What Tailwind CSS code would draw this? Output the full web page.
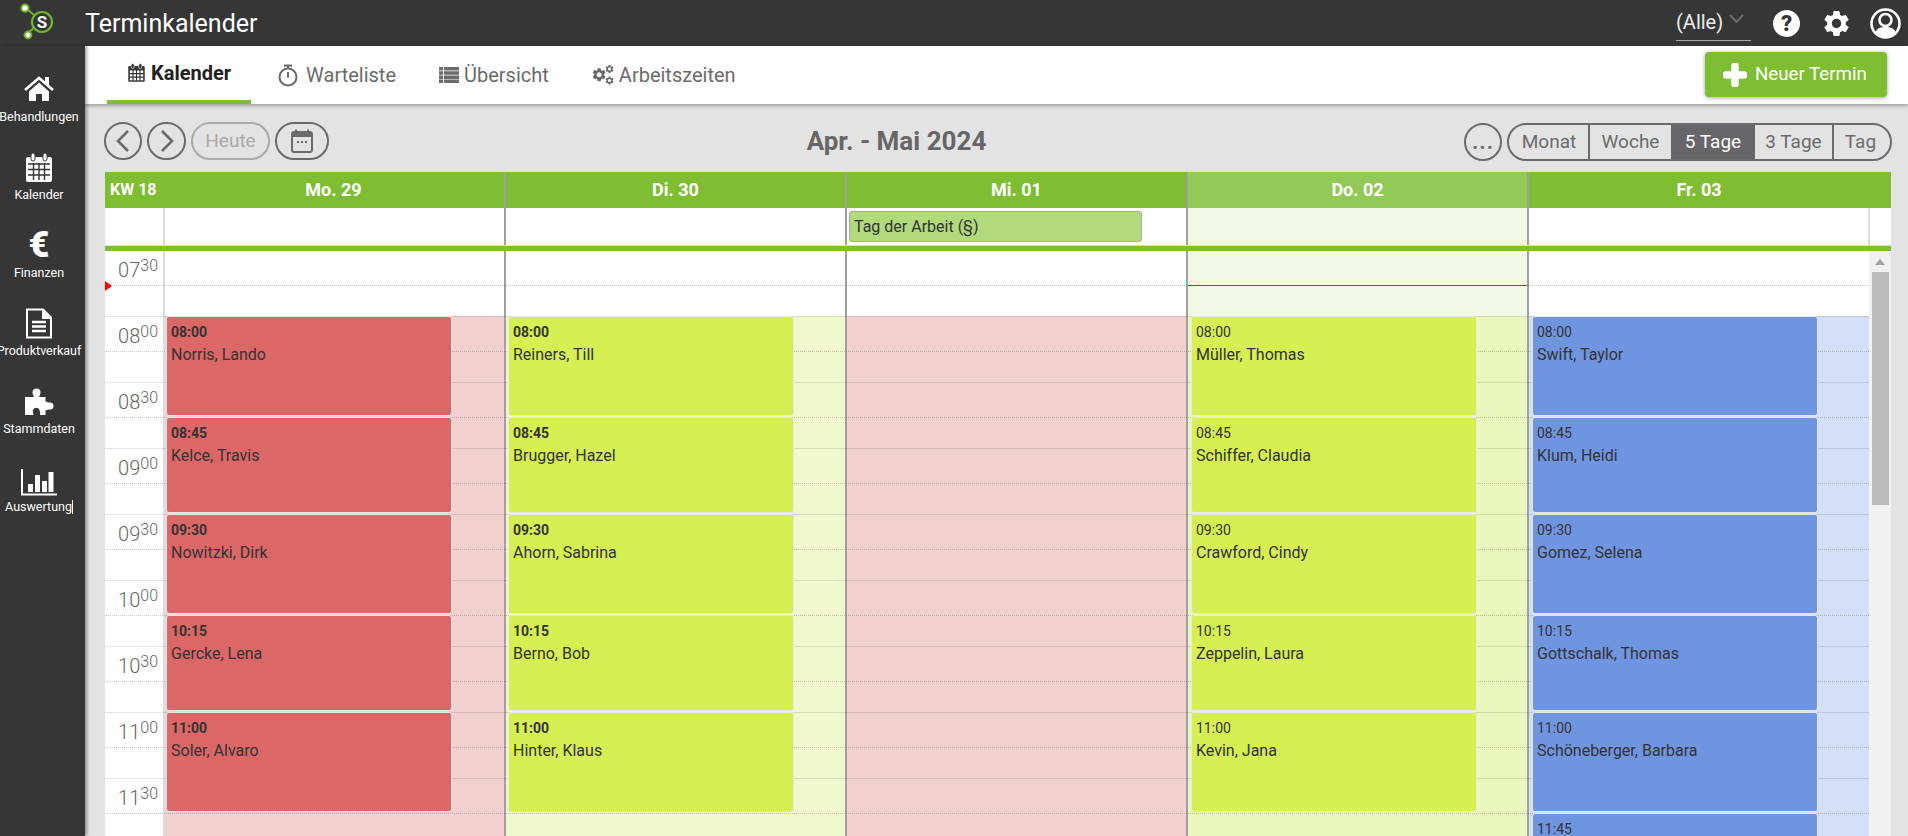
<!DOCTYPE html>
<html lang="de">

<head>
    <meta charset="UTF-8">
    <title>Terminkalender</title>
    <script src="https://cdn.jsdelivr.net/npm/@tailwindcss/browser@4"></script>
</head>

<body class="h-[836px] w-[1908px] overflow-hidden flex flex-col bg-[#e3e3e3] font-['Roboto',sans-serif]">

    <!-- top bar -->
    <header class="h-[46px] shrink-0 bg-[#363636] flex items-center text-white">
        <div class="w-[85px] h-full shrink-0">
            <svg width="85" height="46" viewBox="0 0 85 46">
                <path d="M28 10 L34 15 M29 32 L34 28" stroke="#6fb52f" stroke-width="2" />
                <circle cx="42" cy="22" r="10" fill="none" stroke="#6fb52f" stroke-width="2.2" />
                <circle cx="25" cy="8" r="3.6" fill="#fff" stroke="#6fb52f" stroke-width="2" />
                <circle cx="28" cy="35" r="3.4" fill="#fff" stroke="#6fb52f" stroke-width="2" />
                <text x="42" y="28" text-anchor="middle" fill="#fff" font-family="Roboto" font-weight="700" font-size="17">S</text>
            </svg>
        </div>
        <h1 class="text-[25px] leading-none">Terminkalender</h1>
        <div class="ml-auto flex items-center">
            <div class="w-[75px] h-[36px] mt-[-1px] border-b border-[#aaa] flex items-center">
                <span class="text-[20px] leading-none text-[#eee]">(Alle)</span>
                <svg class="ml-[6px] mt-[-6px]" width="15" height="10" viewBox="0 0 15 10"><path d="M1 1 L7.500 8 L14 1" fill="none" stroke="#6a6a6a" stroke-width="2" /></svg>
            </div>
            <div class="ml-[22px] w-[27px] h-[27px] rounded-full bg-white text-[#363636] text-[22px] font-black leading-[27px] text-center">?</div>
            <svg class="ml-[21px]" width="31" height="31" viewBox="0 0 24 24"><path fill="#fff" d="M19.14 12.94c.04-.3.06-.61.06-.94 0-.32-.02-.64-.07-.94l2.03-1.58c.18-.14.23-.41.12-.61l-1.92-3.32c-.12-.22-.37-.29-.59-.22l-2.39.96c-.5-.38-1.03-.7-1.62-.94l-.36-2.54c-.04-.24-.24-.41-.48-.41h-3.84c-.24 0-.43.17-.47.41l-.36 2.54c-.59.24-1.13.57-1.62.94l-2.39-.96c-.22-.08-.47 0-.59.22L2.74 8.87c-.12.21-.08.47.12.61l2.03 1.58c-.05.3-.09.63-.09.94s.02.64.07.94l-2.03 1.58c-.18.14-.23.41-.12.61l1.92 3.32c.12.22.37.29.59.22l2.39-.96c.5.38 1.03.7 1.62.94l.36 2.54c.05.24.24.41.48.41h3.84c.24 0 .44-.17.47-.41l.36-2.54c.59-.24 1.13-.56 1.62-.94l2.39.96c.22.08.47 0 .59-.22l1.92-3.32c.12-.22.07-.47-.12-.61l-2.01-1.58zM12 15.6c-1.98 0-3.6-1.62-3.6-3.6s1.62-3.6 3.6-3.6 3.6 1.62 3.6 3.6-1.62 3.6-3.6 3.6z" /></svg>
            <svg class="ml-[18px] mr-[7px]" width="31" height="31" viewBox="0 0 31 31">
                <circle cx="15.500" cy="15.500" r="14" fill="none" stroke="#fff" stroke-width="2.600" />
                <circle cx="15.500" cy="12" r="6" fill="none" stroke="#fff" stroke-width="2.600" />
                <path d="M5 25 C7 19.500 11 19 15.500 19 C20 19 24 19.500 26 25 C23 28.500 19 29.500 15.500 29.500 C12 29.500 8 28.500 5 25 Z" fill="#fff" />
            </svg>
        </div>
    </header>

    <div class="flex-1 min-h-0 flex">

        <!-- sidebar -->
        <nav class="relative z-20 w-[85px] shrink-0 bg-[#363636] shadow-[2px_0_3px_rgba(0,0,0,0.35)] pt-px pr-[7px] text-white text-[12.5px] leading-4">
            <a class="h-[78px] flex flex-col items-center justify-end whitespace-nowrap">
                <svg class="mb-[7px]" width="30" height="26" viewBox="0 0 30 26">
                    <path d="M1 14 L15 2 L29 14" fill="none" stroke="#fff" stroke-width="2.600" />
                    <rect x="21" y="1" width="4" height="8" fill="#fff" />
                    <path d="M5 15.500 L15 6.500 L25 15.500 V25 H18 V18 H12 V25 H5 Z" fill="#fff" />
                </svg>
                <span>Behandlungen</span>
            </a>
            <a class="h-[78px] flex flex-col items-center justify-end">
                <svg class="mb-1" width="30" height="30" viewBox="0 0 30 30">
                    <rect x="2" y="4" width="26" height="25" rx="2" fill="#fff" />
                    <path d="M4 11 H26 M4 16.500 H26 M4 22 H26 M9.500 10 V27 M15 10 V27 M20.500 10 V27" stroke="#363636" stroke-width="1.400" />
                    <rect x="7" y="0" width="4" height="8" rx="2" fill="#fff" stroke="#363636" />
                    <rect x="19" y="0" width="4" height="8" rx="2" fill="#fff" stroke="#363636" />
                </svg>
                <span>Kalender</span>
            </a>
            <a class="h-[78px] flex flex-col items-center justify-end">
                <span class="h-8 mb-1 text-[36px] leading-8 font-black">€</span>
                <span>Finanzen</span>
            </a>
            <a class="h-[78px] flex flex-col items-center justify-end whitespace-nowrap">
                <svg class="mb-1" width="28" height="31" viewBox="0 0 28 31">
                    <path d="M2 1.500 H18 L26 9.500 V29.500 H2 Z" fill="none" stroke="#fff" stroke-width="2" />
                    <path d="M17 1 V11 H26 Z" fill="#fff" />
                    <path d="M7 14 H21 M7 18.500 H21 M7 23 H21" stroke="#fff" stroke-width="2.400" />
                </svg>
                <span>Produktverkauf</span>
            </a>
            <a class="h-[78px] flex flex-col items-center justify-end">
                <svg class="mb-[5px]" width="30" height="28" viewBox="0 0 30 28">
                    <path fill="#fff" d="M1 9 H10 C9.500 7.500 8.500 6.500 8.500 4.500 A4 4 0 0 1 16.500 4.500 C16.500 6.500 15.500 7.500 15 9 H21.500 V13.500 C23 14 24 14.500 26 14.500 A3.500 3.500 0 0 1 26 21.500 C24 21.500 23 22 21.500 22.500 V27 H16 C16.500 25 16 23.500 15.500 22 A3.500 3.500 0 0 0 9 22 C8.500 23.500 9 25 9.500 27 H1 Z" />
                </svg>
                <span>Stammdaten</span>
            </a>
            <a class="h-[78px] flex flex-col items-center justify-end">
                <svg class="mb-[3px]" width="36" height="27" viewBox="0 0 36 27">
                    <path d="M1 0 V25.500 H36" fill="none" stroke="#fff" stroke-width="2" />
                    <path fill="#fff" d="M7 15 H12 V23 H7 Z M14 6 H19 V23 H14 Z M21 12 H26 V23 H21 Z M27.500 3 H32.500 V23 H27.500 Z" />
                </svg>
                <span>Auswertung<span class="inline-block w-px h-[14px] bg-white align-[-3px]"></span></span>
            </a>
        </nav>

        <div class="flex-1 min-w-0 flex flex-col">

            <!-- tabs -->
            <div class="relative z-10 h-[58px] shrink-0 bg-white shadow-[0_2px_4px_rgba(0,0,0,0.3)] flex pl-[22px] text-[20px] text-[#6b6b6b]">
                <a class="h-full px-5 flex items-center gap-[5px] border-b-4 border-[#7fbd32] text-[#222] font-bold">
                    <svg width="19" height="20" viewBox="0 0 30 30">
                        <rect x="2" y="4" width="26" height="25" rx="2" fill="#333" />
                        <path d="M4.500 11 H25.500 V26.500 H4.500 Z" fill="#fff" />
                        <path d="M4 16 H26 M4 21.500 H26 M9.500 10 V27 M15 10 V27 M20.500 10 V27" stroke="#333" stroke-width="1.800" />
                        <rect x="6.500" y="0" width="5" height="8" rx="2.500" fill="#333" stroke="#fff" />
                        <rect x="18.500" y="0" width="5" height="8" rx="2.500" fill="#333" stroke="#fff" />
                    </svg>
                    <span>Kalender</span>
                </a>
                <a class="ml-[7px] h-full px-5 flex items-center gap-2">
                    <svg width="20" height="23" viewBox="0 0 20 23">
                        <circle cx="10" cy="13" r="8.500" fill="none" stroke="#6b6b6b" stroke-width="2" />
                        <path d="M6 1.500 H14 M10 2 V5 M10 8 V13.500" stroke="#6b6b6b" stroke-width="2" fill="none" />
                    </svg>
                    <span>Warteliste</span>
                </a>
                <a class="ml-[3px] h-full px-5 flex items-center gap-[5px]">
                    <svg width="20" height="16" viewBox="0 0 20 16">
                        <path fill="#6b6b6b" d="M0 0 H4 V3.500 H0 Z M5 0 H20 V3.500 H5 Z M0 4.200 H4 V7.700 H0 Z M5 4.200 H20 V7.700 H5 Z M0 8.400 H4 V11.900 H0 Z M5 8.400 H20 V11.900 H5 Z M0 12.600 H4 V16 H0 Z M5 12.600 H20 V16 H5 Z" />
                    </svg>
                    <span>Übersicht</span>
                </a>
                <a class="ml-[3px] h-full px-5 flex items-center gap-[5px]">
                    <svg width="22" height="20" viewBox="0 0 22 20">
                        <g fill="#6b6b6b">
                            <path transform="translate(-1 1.500) scale(0.68)" d="M19.14 12.94c.04-.3.06-.61.06-.94 0-.32-.02-.64-.07-.94l2.03-1.58c.18-.14.23-.41.12-.61l-1.92-3.32c-.12-.22-.37-.29-.59-.22l-2.39.96c-.5-.38-1.03-.7-1.62-.94l-.36-2.54c-.04-.24-.24-.41-.48-.41h-3.84c-.24 0-.43.17-.47.41l-.36 2.54c-.59.24-1.13.57-1.62.94l-2.39-.96c-.22-.08-.47 0-.59.22L2.74 8.87c-.12.21-.08.47.12.61l2.03 1.58c-.05.3-.09.63-.09.94s.02.64.07.94l-2.03 1.58c-.18.14-.23.41-.12.61l1.92 3.32c.12.22.37.29.59.22l2.39-.96c.5.38 1.03.7 1.62.94l.36 2.54c.05.24.24.41.48.41h3.84c.24 0 .44-.17.47-.41l.36-2.54c.59-.24 1.13-.56 1.62-.94l2.39.96c.22.08.47 0 .59-.22l1.92-3.32c.12-.22.07-.47-.12-.61l-2.01-1.58zM12 15.6c-1.98 0-3.6-1.62-3.6-3.6s1.62-3.6 3.6-3.6 3.6 1.62 3.6 3.6-1.62 3.6-3.6 3.6z" />
                            <path transform="translate(12.500 -1) scale(0.42)" d="M19.14 12.94c.04-.3.06-.61.06-.94 0-.32-.02-.64-.07-.94l2.03-1.58c.18-.14.23-.41.12-.61l-1.92-3.32c-.12-.22-.37-.29-.59-.22l-2.39.96c-.5-.38-1.03-.7-1.62-.94l-.36-2.54c-.04-.24-.24-.41-.48-.41h-3.84c-.24 0-.43.17-.47.41l-.36 2.54c-.59.24-1.13.57-1.62.94l-2.39-.96c-.22-.08-.47 0-.59.22L2.74 8.87c-.12.21-.08.47.12.61l2.03 1.58c-.05.3-.09.63-.09.94s.02.64.07.94l-2.03 1.58c-.18.14-.23.41-.12.61l1.92 3.32c.12.22.37.29.59.22l2.39-.96c.5.38 1.03.7 1.62.94l.36 2.54c.05.24.24.41.48.41h3.84c.24 0 .44-.17.47-.41l.36-2.54c.59-.24 1.13-.56 1.62-.94l2.39.96c.22.08.47 0 .59-.22l1.92-3.32c.12-.22.07-.47-.12-.61l-2.01-1.58zM12 15.6c-1.98 0-3.6-1.62-3.6-3.6s1.62-3.6 3.6-3.6 3.6 1.62 3.6 3.6-1.62 3.6-3.6 3.6z" />
                            <path transform="translate(12.500 10.500) scale(0.42)" d="M19.14 12.94c.04-.3.06-.61.06-.94 0-.32-.02-.64-.07-.94l2.03-1.58c.18-.14.23-.41.12-.61l-1.92-3.32c-.12-.22-.37-.29-.59-.22l-2.39.96c-.5-.38-1.03-.7-1.62-.94l-.36-2.54c-.04-.24-.24-.41-.48-.41h-3.84c-.24 0-.43.17-.47.41l-.36 2.54c-.59.24-1.13.57-1.62.94l-2.39-.96c-.22-.08-.47 0-.59.22L2.74 8.87c-.12.21-.08.47.12.61l2.03 1.58c-.05.3-.09.63-.09.94s.02.64.07.94l-2.03 1.58c-.18.14-.23.41-.12.61l1.92 3.32c.12.22.37.29.59.22l2.39-.96c.5.38 1.03.7 1.62.94l.36 2.54c.05.24.24.41.48.41h3.84c.24 0 .44-.17.47-.41l.36-2.54c.59-.24 1.13-.56 1.62-.94l2.39.96c.22.08.47 0 .59-.22l1.92-3.32c.12-.22.07-.47-.12-.61l-2.01-1.58zM12 15.6c-1.98 0-3.6-1.62-3.6-3.6s1.62-3.6 3.6-3.6 3.6 1.62 3.6 3.6-1.62 3.6-3.6 3.6z" />
                        </g>
                    </svg>
                    <span>Arbeitszeiten</span>
                </a>
                <button class="ml-auto mr-[21px] mt-[6px] w-[182px] h-[45px] rounded-[4px] bg-[#7fbd32] shadow-[0_1px_4px_rgba(0,0,0,0.35)] text-white text-[18.7px] flex items-center pl-[18px] gap-2">
                    <svg width="24" height="24" viewBox="0 0 24 24"><path d="M12 3 V21 M3 12 H21" stroke="#fff" stroke-width="7.500" stroke-linecap="round" /></svg>
                    <span>Neuer Termin</span>
                </button>
            </div>

            <!-- toolbar -->
            <div class="h-[68px] shrink-0 pl-[19px] pr-[16px] pt-[18px] flex justify-between items-start text-[19px] text-[#6b6b6b]">
                <div class="flex gap-[5px]">
                    <button class="w-[38px] h-[38px] rounded-full border-2 border-[#6b6b6b] flex items-center justify-center">
                        <svg width="14" height="24" viewBox="0 0 14 24"><path d="M12 2 L2 12 L12 22" fill="none" stroke="#6b6b6b" stroke-width="2.600" /></svg>
                    </button>
                    <button class="w-[39px] h-[38px] rounded-full border-2 border-[#6b6b6b] flex items-center justify-center">
                        <svg width="14" height="24" viewBox="0 0 14 24"><path d="M2 2 L12 12 L2 22" fill="none" stroke="#6b6b6b" stroke-width="2.600" /></svg>
                    </button>
                    <button class="w-[79px] h-[38px] rounded-full border-2 border-[#aaa] text-[#aaa]">Heute</button>
                    <button class="w-[54px] h-[38px] rounded-full border-2 border-[#6b6b6b] flex items-center justify-center">
                        <svg width="22" height="24" viewBox="0 0 22 24">
                            <rect x="1" y="3" width="20" height="20" rx="2" fill="none" stroke="#6b6b6b" stroke-width="2" />
                            <path d="M1 3 H21 V8 H1 Z" fill="#6b6b6b" />
                            <path d="M5 0.500 V4 M17 0.500 V4" stroke="#6b6b6b" stroke-width="2" />
                            <path d="M6 13 H8 M10 13 H12 M14 13 H16" stroke="#6b6b6b" stroke-width="2" />
                        </svg>
                    </button>
                </div>
                <div class="text-[26px] leading-[38px] font-bold text-[#666]">Apr. - Mai 2024</div>
                <div class="flex gap-[5px] mt-px">
                    <button class="w-[38px] h-[38px] rounded-full border-2 border-[#6b6b6b] text-[22px] leading-[30px] font-bold tracking-[1px]">...</button>
                    <div class="h-[38px] w-[385px] rounded-full border-2 border-[#6b6b6b] overflow-hidden flex">
                        <a class="w-[81px] pl-px flex items-center justify-center border-r-2 border-[#6b6b6b]">Monat</a>
                        <a class="w-[81px] flex items-center justify-center">Woche</a>
                        <a class="w-[84px] flex items-center justify-center bg-[#676569] text-white">5 Tage</a>
                        <a class="w-[79px] flex items-center justify-center border-r-2 border-[#6b6b6b]">3 Tage</a>
                        <a class="flex-1 pr-[3px] flex items-center justify-center">Tag</a>
                    </div>
                </div>
            </div>

            <!-- calendar -->
            <div class="ml-5 mr-[17px] flex-1 min-h-0 flex flex-col">
                <div class="h-[36px] shrink-0 grid grid-cols-[58px_341px_341px_341px_341px_342px_22px] bg-[#7fbd32] text-white text-[18px] font-bold leading-[35px] text-center">
                    <div class="text-[16px] text-left pl-[5px] whitespace-nowrap">KW 18</div>
                    <div>Mo. 29</div>
                    <div class="border-l-2 border-[#a0a0a0]">Di. 30</div>
                    <div class="border-l-2 border-[#a0a0a0]">Mi. 01</div>
                    <div class="border-l-2 border-[#a0a0a0] bg-[#92c957]">Do. 02</div>
                    <div class="border-l-2 border-[#a0a0a0]">Fr. 03</div>
                    <div></div>
                </div>
                <div class="h-[38px] shrink-0 grid grid-cols-[58px_341px_341px_341px_341px_342px_22px] bg-white border-b border-[#ddd]">
                    <div></div>
                    <div class="border-l-2 border-[#ddd]"></div>
                    <div class="border-l-2 border-[#a0a0a0]"></div>
                    <div class="border-l-2 border-[#a0a0a0] pl-[2px] pt-[3px]">
                        <div class="w-[293px] h-[31px] rounded-[3px] border border-[#aaa] bg-[#b0da7c] pl-[4px] text-[16px] leading-[29px] text-[#333]">Tag der Arbeit (§)</div>
                    </div>
                    <div class="border-l-2 border-[#a0a0a0] bg-[#f1f9e6]"></div>
                    <div class="border-l-2 border-[#a0a0a0]"></div>
                    <div class="border-l-2 border-[#ddd] ml-[-1px]"></div>
                </div>
                <div class="h-[5px] shrink-0 bg-[#7fbd32]"></div>

                <div class="relative flex-1 min-h-0 overflow-hidden grid grid-cols-[58px_341px_341px_341px_341px_342px_22px] bg-white text-[#333]">

                    <!-- hour labels -->
                    <div class="flex flex-col text-[#666] font-light items-end pr-[5px]">
                        <div class="h-[65px] shrink-0 flex"><span class="text-[20px] leading-5 mt-[9px]">07</span><span class="text-[16px] leading-4 mt-[7px]">30</span></div>
                        <div class="h-[66px] shrink-0 flex"><span class="text-[20px] leading-5 mt-[10px]">08</span><span class="text-[16px] leading-4 mt-[8px]">00</span></div>
                        <div class="h-[66px] shrink-0 flex"><span class="text-[20px] leading-5 mt-[10px]">08</span><span class="text-[16px] leading-4 mt-[8px]">30</span></div>
                        <div class="h-[66px] shrink-0 flex"><span class="text-[20px] leading-5 mt-[10px]">09</span><span class="text-[16px] leading-4 mt-[8px]">00</span></div>
                        <div class="h-[66px] shrink-0 flex"><span class="text-[20px] leading-5 mt-[10px]">09</span><span class="text-[16px] leading-4 mt-[8px]">30</span></div>
                        <div class="h-[66px] shrink-0 flex"><span class="text-[20px] leading-5 mt-[10px]">10</span><span class="text-[16px] leading-4 mt-[8px]">00</span></div>
                        <div class="h-[66px] shrink-0 flex"><span class="text-[20px] leading-5 mt-[10px]">10</span><span class="text-[16px] leading-4 mt-[8px]">30</span></div>
                        <div class="h-[66px] shrink-0 flex"><span class="text-[20px] leading-5 mt-[10px]">11</span><span class="text-[16px] leading-4 mt-[8px]">00</span></div>
                        <div class="h-[66px] shrink-0 flex"><span class="text-[20px] leading-5 mt-[10px]">11</span><span class="text-[16px] leading-4 mt-[8px]">30</span></div>
                    </div>

                    <!-- Mo -->
                    <div class="relative border-l-2 border-[#ddd] flex flex-col">
                        <div class="h-[65px] shrink-0"></div>
                        <div class="flex-1 bg-[#f3d1d1]"></div>
                        <div class="absolute z-10 left-px top-[65px] w-[286px] h-[100px] rounded-[3px] border border-[#e8e8e8] bg-[#db6767] pl-[4px] pt-[7px]"><div class="text-[14px] leading-4 font-bold">08:00</div><div class="mt-[5px] text-[16px] leading-5">Norris, Lando</div></div>
                        <div class="absolute z-10 left-px top-[166px] w-[286px] h-[96px] rounded-[3px] border border-[#e8e8e8] bg-[#db6767] pl-[4px] pt-[7px]"><div class="text-[14px] leading-4 font-bold">08:45</div><div class="mt-[5px] text-[16px] leading-5">Kelce, Travis</div></div>
                        <div class="absolute z-10 left-px top-[263px] w-[286px] h-[100px] rounded-[3px] border border-[#e8e8e8] bg-[#db6767] pl-[4px] pt-[7px]"><div class="text-[14px] leading-4 font-bold">09:30</div><div class="mt-[5px] text-[16px] leading-5">Nowitzki, Dirk</div></div>
                        <div class="absolute z-10 left-px top-[364px] w-[286px] h-[96px] rounded-[3px] border border-[#e8e8e8] bg-[#db6767] pl-[4px] pt-[7px]"><div class="text-[14px] leading-4 font-bold">10:15</div><div class="mt-[5px] text-[16px] leading-5">Gercke, Lena</div></div>
                        <div class="absolute z-10 left-px top-[461px] w-[286px] h-[100px] rounded-[3px] border border-[#e8e8e8] bg-[#db6767] pl-[4px] pt-[7px]"><div class="text-[14px] leading-4 font-bold">11:00</div><div class="mt-[5px] text-[16px] leading-5">Soler, Alvaro</div></div>
                    </div>

                    <!-- Di -->
                    <div class="relative border-l-2 border-[#a0a0a0] flex flex-col">
                        <div class="h-[65px] shrink-0"></div>
                        <div class="flex-1 bg-[#f0f9cd]"></div>
                        <div class="absolute z-10 left-[2px] top-[65px] w-[286px] h-[100px] rounded-[3px] border border-[#e8e8e8] bg-[#d6ef52] pl-[4px] pt-[7px]"><div class="text-[14px] leading-4 font-bold">08:00</div><div class="mt-[5px] text-[16px] leading-5">Reiners, Till</div></div>
                        <div class="absolute z-10 left-[2px] top-[166px] w-[286px] h-[96px] rounded-[3px] border border-[#e8e8e8] bg-[#d6ef52] pl-[4px] pt-[7px]"><div class="text-[14px] leading-4 font-bold">08:45</div><div class="mt-[5px] text-[16px] leading-5">Brugger, Hazel</div></div>
                        <div class="absolute z-10 left-[2px] top-[263px] w-[286px] h-[100px] rounded-[3px] border border-[#e8e8e8] bg-[#d6ef52] pl-[4px] pt-[7px]"><div class="text-[14px] leading-4 font-bold">09:30</div><div class="mt-[5px] text-[16px] leading-5">Ahorn, Sabrina</div></div>
                        <div class="absolute z-10 left-[2px] top-[364px] w-[286px] h-[96px] rounded-[3px] border border-[#e8e8e8] bg-[#d6ef52] pl-[4px] pt-[7px]"><div class="text-[14px] leading-4 font-bold">10:15</div><div class="mt-[5px] text-[16px] leading-5">Berno, Bob</div></div>
                        <div class="absolute z-10 left-[2px] top-[461px] w-[286px] h-[100px] rounded-[3px] border border-[#e8e8e8] bg-[#d6ef52] pl-[4px] pt-[7px]"><div class="text-[14px] leading-4 font-bold">11:00</div><div class="mt-[5px] text-[16px] leading-5">Hinter, Klaus</div></div>
                    </div>

                    <!-- Mi -->
                    <div class="border-l-2 border-[#a0a0a0] flex flex-col">
                        <div class="h-[65px] shrink-0"></div>
                        <div class="flex-1 bg-[#f3d1d1]"></div>
                    </div>

                    <!-- Do -->
                    <div class="relative border-l-2 border-[#a0a0a0] flex flex-col">
                        <div class="h-[65px] shrink-0 bg-[#f1f9e6]"></div>
                        <div class="flex-1 bg-[#e9f6bd]"></div>
                        <div class="absolute z-[5] left-0 right-0 top-[34px] h-px bg-[#e02020]"></div>
                        <div class="absolute z-10 left-[3px] top-[65px] w-[286px] h-[100px] rounded-[3px] border border-[#e8e8e8] bg-[#d6ef52] pl-[4px] pt-[7px]"><div class="text-[14px] leading-4">08:00</div><div class="mt-[5px] text-[16px] leading-5">Müller, Thomas</div></div>
                        <div class="absolute z-10 left-[3px] top-[166px] w-[286px] h-[96px] rounded-[3px] border border-[#e8e8e8] bg-[#d6ef52] pl-[4px] pt-[7px]"><div class="text-[14px] leading-4">08:45</div><div class="mt-[5px] text-[16px] leading-5">Schiffer, Claudia</div></div>
                        <div class="absolute z-10 left-[3px] top-[263px] w-[286px] h-[100px] rounded-[3px] border border-[#e8e8e8] bg-[#d6ef52] pl-[4px] pt-[7px]"><div class="text-[14px] leading-4">09:30</div><div class="mt-[5px] text-[16px] leading-5">Crawford, Cindy</div></div>
                        <div class="absolute z-10 left-[3px] top-[364px] w-[286px] h-[96px] rounded-[3px] border border-[#e8e8e8] bg-[#d6ef52] pl-[4px] pt-[7px]"><div class="text-[14px] leading-4">10:15</div><div class="mt-[5px] text-[16px] leading-5">Zeppelin, Laura</div></div>
                        <div class="absolute z-10 left-[3px] top-[461px] w-[286px] h-[100px] rounded-[3px] border border-[#e8e8e8] bg-[#d6ef52] pl-[4px] pt-[7px]"><div class="text-[14px] leading-4">11:00</div><div class="mt-[5px] text-[16px] leading-5">Kevin, Jana</div></div>
                    </div>

                    <!-- Fr -->
                    <div class="relative border-l-2 border-[#a0a0a0] flex flex-col">
                        <div class="h-[65px] shrink-0"></div>
                        <div class="flex-1 bg-[#d3dff6]"></div>
                        <div class="absolute z-10 left-[3px] top-[65px] w-[286px] h-[100px] rounded-[3px] border border-[#e8e8e8] bg-[#6f95e0] pl-[4px] pt-[7px]"><div class="text-[14px] leading-4">08:00</div><div class="mt-[5px] text-[16px] leading-5">Swift, Taylor</div></div>
                        <div class="absolute z-10 left-[3px] top-[166px] w-[286px] h-[96px] rounded-[3px] border border-[#e8e8e8] bg-[#6f95e0] pl-[4px] pt-[7px]"><div class="text-[14px] leading-4">08:45</div><div class="mt-[5px] text-[16px] leading-5">Klum, Heidi</div></div>
                        <div class="absolute z-10 left-[3px] top-[263px] w-[286px] h-[100px] rounded-[3px] border border-[#e8e8e8] bg-[#6f95e0] pl-[4px] pt-[7px]"><div class="text-[14px] leading-4">09:30</div><div class="mt-[5px] text-[16px] leading-5">Gomez, Selena</div></div>
                        <div class="absolute z-10 left-[3px] top-[364px] w-[286px] h-[96px] rounded-[3px] border border-[#e8e8e8] bg-[#6f95e0] pl-[4px] pt-[7px]"><div class="text-[14px] leading-4">10:15</div><div class="mt-[5px] text-[16px] leading-5">Gottschalk, Thomas</div></div>
                        <div class="absolute z-10 left-[3px] top-[461px] w-[286px] h-[100px] rounded-[3px] border border-[#e8e8e8] bg-[#6f95e0] pl-[4px] pt-[7px]"><div class="text-[14px] leading-4">11:00</div><div class="mt-[5px] text-[16px] leading-5">Schöneberger, Barbara</div></div>
                        <div class="absolute z-10 left-[3px] top-[562px] w-[286px] h-[100px] rounded-[3px] border border-[#e8e8e8] bg-[#6f95e0] pl-[4px] pt-[7px]"><div class="text-[14px] leading-4">11:45</div></div>
                    </div>

                    <!-- scrollbar -->
                    <div class="relative z-[6] bg-[#f1f1f1] flex flex-col items-center pt-[8px]">
                        <div class="w-0 h-0 border-x-[5px] border-x-transparent border-b-[6px] border-b-[#a3a3a3]"></div>
                        <div class="mt-[7px] w-[17px] h-[233px] bg-[#bcbcbc]"></div>
                    </div>

                    <!-- grid lines, under the appointments -->
                    <div class="absolute z-[1] left-0 top-0 w-[1764px] flex flex-col">
                        <div class="h-[35px] border-b border-dotted border-black/20"></div>
                        <div class="h-[31px] border-b border-black/10"></div>
                        <div class="h-[35px] border-b border-dotted border-black/20"></div>
                        <div class="h-[31px] border-b border-black/10"></div>
                        <div class="h-[35px] border-b border-dotted border-black/20"></div>
                        <div class="h-[31px] border-b border-black/10"></div>
                        <div class="h-[35px] border-b border-dotted border-black/20"></div>
                        <div class="h-[31px] border-b border-black/10"></div>
                        <div class="h-[35px] border-b border-dotted border-black/20"></div>
                        <div class="h-[31px] border-b border-black/10"></div>
                        <div class="h-[35px] border-b border-dotted border-black/20"></div>
                        <div class="h-[31px] border-b border-black/10"></div>
                        <div class="h-[35px] border-b border-dotted border-black/20"></div>
                        <div class="h-[31px] border-b border-black/10"></div>
                        <div class="h-[35px] border-b border-dotted border-black/20"></div>
                        <div class="h-[31px] border-b border-black/10"></div>
                        <div class="h-[35px] border-b border-dotted border-black/20"></div>
                    </div>

                    <!-- current time marker -->
                    <div class="absolute z-[5] left-0 top-[30px] w-0 h-0 border-y-[5px] border-y-transparent border-l-[7px] border-l-[#f00000]"></div>
                </div>
            </div>
        </div>
    </div>
</body>

</html>
